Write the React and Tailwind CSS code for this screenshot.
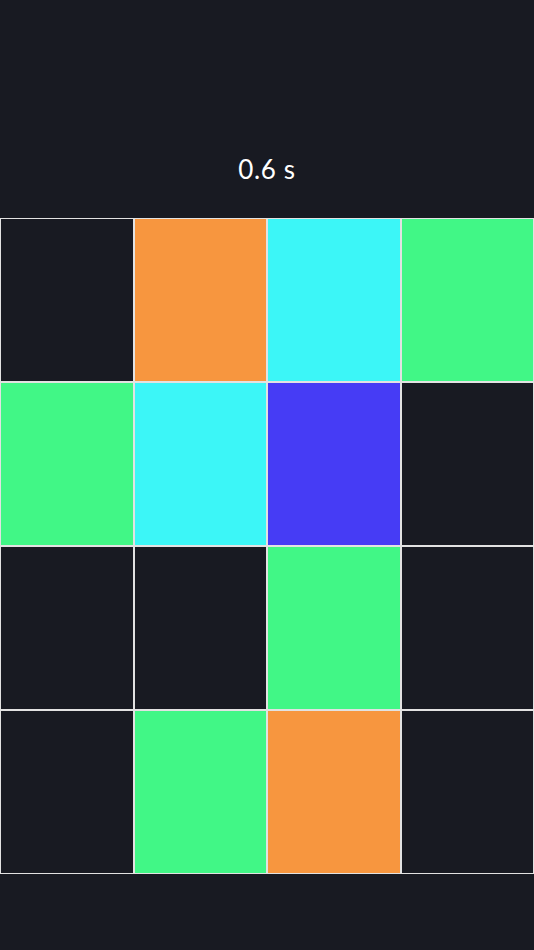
import React from 'react';

const K = '#181a22';
const O = '#f7963f';
const C = '#3cf6f7';
const G = '#41f786';
const B = '#463cf5';

const cells = [
  K, O, C, G,
  G, C, B, K,
  K, K, G, K,
  K, G, O, K,
];

export default function App() {
  return (
    <div className="min-h-screen w-full bg-[#181a22] flex flex-col" style={{ fontFamily: 'Lato, "Noto Sans", sans-serif' }}>
      <div className="h-[218px] flex items-end justify-center pb-[29px]">
        <span className="text-white text-[26px] tracking-wide">0.6 s</span>
      </div>
      <div className="grid grid-cols-4 grid-rows-[repeat(4,164px)]">
        {cells.map((c, i) => (
          <div key={i} className="border border-[#e2e2e2]" style={{ backgroundColor: c }} />
        ))}
      </div>
    </div>
  );
}
